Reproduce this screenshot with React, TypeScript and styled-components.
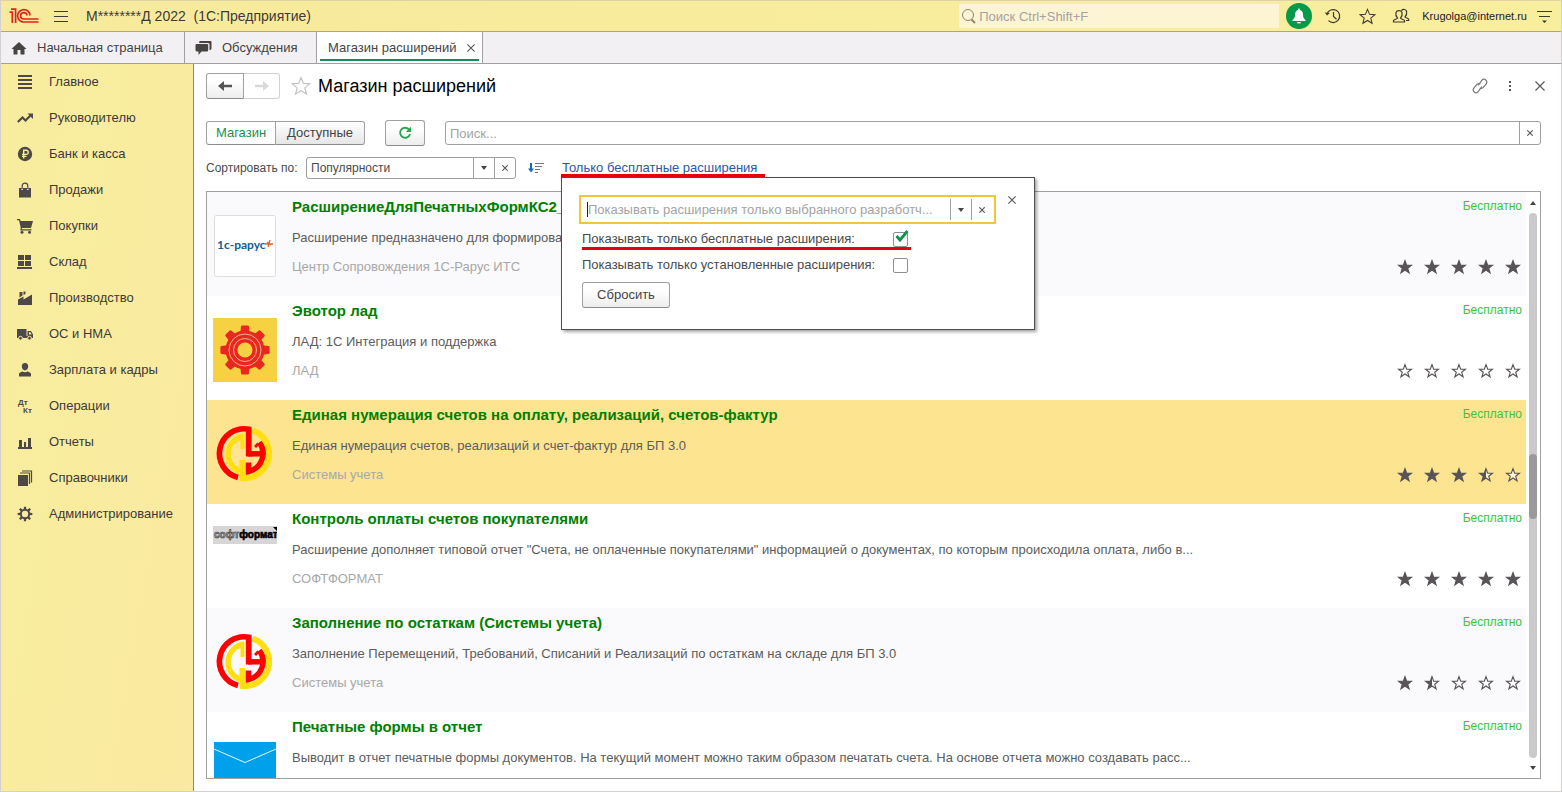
import React from "react";
import styled, { createGlobalStyle, css } from "styled-components";

const colors = {
  ink: "#3f3a36",
  text: "#4a4a4a",
  muted: "#a8a8a8",
  line: "#a0a0a0",
  green: "#008000",
  price: "#3cc43c",
  alert: "#e3000f",
  icon: "#4e4848",
};

const GlobalStyle = createGlobalStyle`
  *, *::before, *::after { box-sizing: border-box; }
  body {
    margin: 0;
    font-family: "Liberation Sans", Arial, sans-serif;
    font-size: 13px;
    line-height: 16px;
    color: ${colors.text};
    background: #fff;
  }
  button, input, select { font: inherit; color: inherit; margin: 0; }
  button { padding: 0; border: 0; background: none; }
  svg { display: block; flex: none; }
`;

const Window = styled.div`
  display: flex;
  flex-direction: column;
  height: 100vh;
  border: 1px solid #d3d0cf;
  border-top-color: #e0d2a8;
`;

/* ---------- title bar ---------- */

const TitleBar = styled.header`
  display: flex;
  align-items: center;
  flex: none;
  height: 31px;
  padding: 0 7px 0 8px;
  background: linear-gradient(90deg, #f8ea9c, #f8eb9c 40%, #f9ed9e);
  border-bottom: 1px solid #b3a66a;
  color: ${colors.ink};
`;

const IconButton = styled.button<{ $size?: number }>`
  display: flex;
  align-items: center;
  justify-content: center;
  flex: none;
  width: ${(p) => p.$size ?? 34}px;
  height: 26px;
`;

const AppTitle = styled.div`
  flex: 1;
  margin-left: 3px;
  font-size: 14px;
  white-space: pre;
`;

const GlobalSearch = styled.label`
  display: flex;
  align-items: center;
  gap: 2px;
  width: 320px;
  height: 24px;
  padding: 0 2px;
  margin-right: 3px;
  background: #fdf4d4;
`;

const PlainInput = styled.input`
  flex: 1;
  min-width: 0;
  height: 100%;
  padding: 0;
  border: 0;
  outline: 0;
  background: none;
  &::placeholder { color: #a3a3a3; opacity: 1; }
`;

const BellBadge = styled.span`
  display: flex;
  align-items: center;
  justify-content: center;
  width: 26px;
  height: 26px;
  border-radius: 50%;
  background: #059a49;
`;

const UserName = styled.span`
  margin: 0 7px 0 4px;
  font-size: 11px;
  color: #222;
`;

/* ---------- tabs ---------- */

const TabBar = styled.nav`
  display: flex;
  flex: none;
  height: 32px;
  background: #f2f0f2;
  border-bottom: 1px solid ${colors.line};
`;

const Tab = styled.button<{ $active?: boolean; $width: number }>`
  position: relative;
  display: flex;
  align-items: center;
  gap: 10px;
  width: ${(p) => p.$width}px;
  padding: 0 0 0 10px;
  border-right: 1px solid ${colors.line};
  color: #444;
  white-space: nowrap;
  ${(p) =>
    p.$active &&
    css`
      justify-content: space-between;
      padding: 0 7px 0 11px;
      background: #fff;
      &::after {
        content: "";
        position: absolute;
        left: 3px;
        right: 3px;
        bottom: 2px;
        height: 2px;
        background: #1a8a57;
      }
    `}
`;

/* ---------- sidebar ---------- */

const Body = styled.div`
  display: flex;
  flex: 1;
  min-height: 0;
`;

const Sidebar = styled.nav`
  flex: none;
  width: 193px;
  background: linear-gradient(100deg, #f8ed9e 20%, #fae9a0);
  border-right: 1px solid #8d8878;
`;

const SideItem = styled.a`
  display: flex;
  align-items: center;
  gap: 16px;
  height: 36px;
  padding-left: 16px;
  color: ${colors.ink};
  text-decoration: none;
`;

/* ---------- main area ---------- */

const Main = styled.main`
  display: flex;
  flex-direction: column;
  flex: 1;
  min-width: 0;
  padding: 9px 6px 12px 12px;
`;

const PageHeader = styled.div`
  display: flex;
  align-items: center;
  height: 26px;
`;

const PageTitle = styled.h1`
  flex: 1;
  margin: 0;
  font-size: 18px;
  line-height: 24px;
  font-weight: 400;
  color: #000;
`;

const ButtonGroup = styled.div`
  display: flex;
  flex: none;
`;

const Button = styled.button<{ $active?: boolean; $faded?: boolean }>`
  display: flex;
  align-items: center;
  justify-content: center;
  height: 26px;
  min-width: 40px;
  padding: 0 8px;
  border: 1px solid ${(p) => (p.$faded ? "#d0d0d0" : colors.line)};
  border-bottom-color: ${(p) => (p.$faded ? "#d0d0d0" : "#8c8c8c")};
  border-radius: 3px;
  background: ${(p) => (p.$active ? "#fff" : "linear-gradient(#fff 30%, #ededed)")};
  color: ${(p) => (p.$active ? "#159250" : "#444")};
`;

const History = styled(ButtonGroup)`
  margin-right: 4px;
  ${Button} { min-width: 38px; border-radius: 3px 0 0 3px; }
  ${Button} + ${Button} { min-width: 36px; border-left: 0; border-radius: 0 3px 3px 0; background: #fff; }
`;

const Switcher = styled(ButtonGroup)`
  ${Button} { width: 70px; height: 24px; border-radius: 3px 0 0 3px; }
  ${Button} + ${Button} {
    width: 89px;
    border-left: 0;
    border-radius: 0 3px 3px 0;
    background: linear-gradient(#fff, #e6e6e6);
  }
`;

const ToolRow = styled.div`
  display: flex;
  align-items: center;
  height: 28px;
  margin: 20px 14px 0 0;
  gap: 20px;
`;

const Field = styled.div<{ $wide?: boolean }>`
  display: flex;
  align-items: stretch;
  flex: ${(p) => (p.$wide ? "1" : "none")};
  width: ${(p) => (p.$wide ? "auto" : "210px")};
  height: ${(p) => (p.$wide ? 24 : 22)}px;
  border: 1px solid ${colors.line};
  border-radius: 3px;
  background: #fff;
`;

const FieldInput = styled(PlainInput)`
  padding-left: 4px;
`;

const Select = styled.select`
  flex: 1;
  min-width: 0;
  padding: 0 4px;
  border: 0;
  outline: 0;
  appearance: none;
  background: none;
  font-size: 12px;
`;

const FieldButton = styled.button`
  display: flex;
  align-items: center;
  justify-content: center;
  flex: none;
  width: 21px;
  border-left: 1px solid ${colors.line};
`;

const SortRow = styled.div`
  display: flex;
  align-items: center;
  height: 22px;
  margin-top: 10px;
`;

const SortLabel = styled.label`
  width: 100px;
  font-size: 12px;
`;

const FilterAnchor = styled.div`
  position: relative;
  display: flex;
  align-items: center;
  height: 22px;
  margin-left: 6px;
  &::after {
    content: "";
    position: absolute;
    z-index: 3;
    left: -1px;
    right: -8px;
    bottom: 2px;
    height: 3px;
    background: ${colors.alert};
  }
`;

const FilterLink = styled.a`
  color: #2b57a5;
  text-decoration: none;
  white-space: nowrap;
`;

/* ---------- filter popup ---------- */

const Popup = styled.section`
  position: absolute;
  z-index: 2;
  top: 20px;
  left: -1px;
  width: 474px;
  height: 153px;
  padding: 17px 14px 0 17px;
  display: flex;
  align-items: flex-start;
  gap: 8px;
  background: #fff;
  border: 1px solid #4d4d4d;
  box-shadow: 2px 2px 3px rgba(0, 0, 0, 0.35);
`;

const PopupForm = styled.div`
  display: flex;
  flex-direction: column;
  width: 417px;
`;

const DeveloperField = styled.div`
  display: flex;
  align-items: center;
  height: 29px;
  margin-bottom: 2px;
  padding: 0 2px 0 6px;
  border: 2px solid #f2c63c;
  ${PlainInput} { padding-left: 0; }
  ${FieldButton} { height: 21px; }
`;

const Caret = styled.span`
  flex: none;
  width: 1px;
  height: 15px;
  background: #222;
`;

const CheckRow = styled.div<{ $marked?: boolean }>`
  position: relative;
  display: flex;
  align-items: center;
  justify-content: space-between;
  width: 329px;
  height: 26px;
  margin-left: 3px;
  padding-right: 3px;
  ${(p) =>
    p.$marked &&
    css`
      &::after {
        content: "";
        position: absolute;
        left: 0;
        right: 0;
        bottom: 2px;
        height: 3px;
        background: ${colors.alert};
      }
    `}
`;

const CheckBox = styled.span`
  position: relative;
  width: 15px;
  height: 15px;
  input {
    display: block;
    width: 15px;
    height: 15px;
    appearance: none;
    border: 1px solid #8f8f8f;
    border-radius: 2px;
    background: #fff;
  }
  svg {
    position: absolute;
    left: 1px;
    top: -2px;
    pointer-events: none;
  }
`;

const ResetButton = styled(Button)`
  width: 88px;
  margin: 4px 0 0 3px;
`;

const CloseButton = styled.button`
  display: flex;
  align-items: center;
  justify-content: center;
  width: 16px;
  height: 10px;
`;

/* ---------- list ---------- */

const ListFrame = styled.div`
  display: flex;
  flex: 1;
  min-height: 0;
  margin: 12px 14px 0 0;
  border: 1px solid ${colors.line};
`;

const List = styled.ul`
  flex: 1;
  min-width: 0;
  margin: 0;
  padding: 0;
  list-style: none;
  overflow: hidden;
`;

const Item = styled.li<{ $selected: boolean }>`
  display: flex;
  gap: 15px;
  height: 104px;
  padding: 6px 4px 0 6px;
  background: #fff;
  &:nth-child(4n + 1) { background: #faf9fb; }
  ${(p) => p.$selected && css`&& { background: #fde491; }`}
`;

const Thumb = styled.div`
  flex: none;
  width: 64px;
  padding-top: 16px;
`;

const ItemText = styled.div`
  flex: 1;
  min-width: 0;
`;

const ItemTitle = styled.h2`
  margin: 0 0 14px;
  font-size: 15px;
  line-height: 18px;
  font-weight: 700;
  color: ${colors.green};
`;

const ItemLine = styled.p<{ $muted?: boolean }>`
  margin: 0 0 13px;
  white-space: nowrap;
  color: ${(p) => (p.$muted ? colors.muted : "#5c5c5c")};
`;

const ItemSide = styled.div`
  display: flex;
  flex-direction: column;
  align-items: flex-end;
  gap: 44px;
`;

const Price = styled.span`
  font-size: 12px;
  color: ${colors.price};
`;

const Stars = styled.div`
  display: flex;
  gap: 9px;
`;

const ScrollBar = styled.div`
  display: flex;
  flex-direction: column;
  align-items: center;
  justify-content: space-between;
  flex: none;
  width: 14px;
  padding: 9px 0 8px;
`;

const Track = styled.div`
  flex: 1;
  width: 8px;
  margin: 8px 0;
  padding-top: 241px;
  border-radius: 4px;
  background: #cbc9cb;
`;

const Handle = styled.div`
  height: 65px;
  border-radius: 4px;
  background: #9b999b;
`;

/* ---------- drawings ---------- */

const Cross = ({ size = 6 }: { size?: number }) => (
  <svg width={size} height={size} viewBox="0 0 10 10">
    <path d="M0.5 0.5 9.5 9.5M9.5 0.5 0.5 9.5" stroke="#555" strokeWidth={11 / size} />
  </svg>
);

const Triangle = ({ up }: { up?: boolean }) => (
  <svg width="6" height="4" viewBox="0 0 6 4">
    <path d={up ? "M0 4 3 0 6 4z" : "M0 0H6L3 4z"} fill="#444" />
  </svg>
);

const STAR = "M9 2.6 10.700 7.300H15.400L11.700 10.200 13.100 14.800 9 12 4.900 14.800 6.300 10.200 2.600 7.300H7.300z";

const Star = ({ fill }: { fill: number }) => (
  <svg width="18" height="18" viewBox="0 0 18 18">
    <path
      d={STAR}
      fill={fill === 1 ? "#575357" : "#fff"}
      fillOpacity={fill === 1 ? 1 : 0.6}
      stroke="#575357"
      strokeWidth="1.100"
    />
    {fill === 0.5 && <path d="M9 2.6V12L4.900 14.800 6.300 10.200 2.600 7.300H7.300z" fill="#575357" />}
  </svg>
);

const OneCLogo = () => (
  <svg width="30" height="18" viewBox="0 0 30 18" fill="none" stroke="#d8261c" strokeWidth="1.700">
    <path d="M.5 5.200H3.300V16M2 2.200H6.600V16" />
    <path d="M21 8.500A6.200 6.200 0 1 0 15 15H29.500" />
    <path d="M18 8.500A3.200 3.200 0 1 0 15 12H29.500" />
  </svg>
);

const MenuIcon = () => (
  <svg width="14" height="13" viewBox="0 0 14 13">
    <path d="M0 1.500H14M0 6.500H14M0 11.500H14" stroke="#3d3b2d" />
  </svg>
);

const SearchIcon = () => (
  <svg width="16" height="18" viewBox="0 0 16 18" fill="none" stroke="#8c8868">
    <circle cx="7" cy="8" r="5.500" />
    <path d="M10.500 12.500 14 16" strokeWidth="2" />
  </svg>
);

const BellIcon = () => (
  <svg width="14" height="16" viewBox="0 0 14 16" fill="#fff">
    <path d="M7 .5C7.800 .5 8 1.200 8 2c2 .6 3 2.400 3 4.500 0 3 .8 4 2.500 5.500V13H.5V12C2.200 10.500 3 9.500 3 6.500 3 4.400 4 2.600 6 2c0-.8.200-1.500 1-1.500zM5 14H9a2 1.600 0 0 1-4 0z" />
  </svg>
);

const HistoryIcon = () => (
  <svg width="18" height="16" viewBox="0 0 18 16" fill="none" stroke="#3d3b2d" strokeWidth="1.200">
    <path d="M3 6A6.500 6.500 0 1 1 4.500 12.600" />
    <path d="M9.500 4V8.500L12.500 11.200" />
    <path d="M.8 4.500 3 7.500 5.800 5z" fill="#3d3b2d" stroke="none" />
  </svg>
);

const FavoriteIcon = ({ size = 17, stroke = "#3d3b2d" }: { size?: number; stroke?: string }) => (
  <svg width={size} height={size} viewBox="0 0 18 18" fill="none" stroke={stroke} strokeWidth="1.100">
    <path d="M9 1.500 11.200 6.700 16.800 7.100 12.500 10.700 13.900 16.200 9 13.200 4.100 16.200 5.500 10.700 1.200 7.100 6.800 6.700z" />
  </svg>
);

const UsersIcon = () => (
  <svg width="18" height="16" viewBox="0 0 18 16" fill="none" stroke="#3d3b2d" strokeWidth="1.200">
    <path d="M1.500 14V12.500C2 11.500 5 11 5.500 10.200 4 8.500 3.500 6.500 4 4.500 4.800 2 9.200 2 10 4.500c.5 2 0 4-1.500 5.700C9 11 12 11.500 12.500 12.500V14z" />
    <path d="M9.500 2.500C11 .8 14 1.200 14.600 3.500 15 5.500 14.500 7.200 13 9c.5.800 3.300 1.200 3.700 2.200V12.500H14" />
  </svg>
);

const SettingsIcon = () => (
  <svg width="15" height="15" viewBox="0 0 15 15">
    <path d="M0 2.500H15M2 7.500H13" stroke="#3d3b2d" />
    <path d="M5 11.500H10L7.500 14z" fill="#3d3b2d" />
  </svg>
);

const HomeIcon = () => (
  <svg width="16" height="14" viewBox="0 0 16 14" fill="#484444">
    <path d="M8 1 15.500 8H13.500V13.500H9.500V9H6.500V13.500H2.500V8H.5z" />
  </svg>
);

const ChatIcon = () => (
  <svg width="17" height="16" viewBox="0 0 17 16" fill="#484444">
    <path d="M5 1H15.500Q16.500 1 16.500 2V8.500Q16.500 10 14.500 10V4.500Q14.500 3 13 3H4Q4 1 5 1z" />
    <path d="M1.500 4H12Q13.200 4 13.200 5.200V10Q13.200 11.500 12 11.500H6.500L3.500 15V11.500H2Q.5 11.500 .5 10V5Q.5 4 1.500 4z" />
  </svg>
);

const Arrow = ({ right }: { right?: boolean }) => (
  <svg width="14" height="12" viewBox="0 0 14 12">
    <path
      d={right ? "M0 4.800H8V1L14 6 8 11V7.200H0z" : "M14 4.800H6V1L0 6 6 11V7.200H14z"}
      fill={right ? "#d8d8d8" : "#555"}
    />
  </svg>
);

const LinkIcon = () => (
  <svg width="16" height="16" viewBox="0 0 16 16" fill="none" stroke="#777" strokeWidth="1.200">
    <path d="M6 7.500 10 2.200C12.300-.4 16.200 3 14.200 5.800L11 9.600C10 10.600 8.600 10.600 7.700 10" />
    <path d="M10 8.500 6 13.800C3.700 16.400-.2 13 1.800 10.200L5 6.400C6 5.400 7.400 5.400 8.300 6" />
  </svg>
);

const DotsIcon = () => (
  <svg width="4" height="12" viewBox="0 0 4 12" fill="#555">
    <path d="M1 1H3V3H1zM1 5H3V7H1zM1 9H3V11H1z" />
  </svg>
);

const RefreshIcon = () => (
  <svg width="14" height="14" viewBox="0 0 14 14">
    <path d="M11.300 4A5 5 0 1 0 12 8" fill="none" stroke="#2da44e" strokeWidth="1.900" />
    <path d="M13 .8V6H7.800z" fill="#2da44e" />
  </svg>
);

const SortIcon = () => (
  <svg width="16" height="12" viewBox="0 0 16 12">
    <path d="M3 1V8" stroke="#1b6cb0" strokeWidth="2" />
    <path d="M0 6.500H6L3 10.500z" fill="#1b6cb0" />
    <path d="M7 1.500H16M7 4.500H14M7 7.500H12M7 10.500H10" stroke="#777" />
  </svg>
);

const Tick = () => (
  <svg width="15" height="14" viewBox="0 0 15 14">
    <path d="M2.500 6 6 10 13.500 1" fill="none" stroke="#0f9150" strokeWidth="2.800" />
  </svg>
);

const gearPath = (teeth: number, rOut: number, rIn: number, c: number, top = 0.36, base = 0.62) => {
  const pts: string[] = [];
  for (let i = 0; i < teeth; i++) {
    const a = (i * 2 * Math.PI) / teeth - Math.PI / 2;
    const w = Math.PI / teeth;
    [[-base, rIn], [-top, rOut], [top, rOut], [base, rIn]].forEach(([k, r]) => {
      pts.push(`${(c + r * Math.cos(a + k * w)).toFixed(2)} ${(c + r * Math.sin(a + k * w)).toFixed(2)}`);
    });
  }
  return `M${pts.join("L")}Z`;
};

const sideIcons: Record<string, React.ReactNode> = {
  main: <path d="M1 2H15M1 6H15M1 10H15M1 14H15" stroke={colors.icon} strokeWidth="2" />,
  trend: (
    <>
      <path d="M.8 12 5.500 7.500 8.500 10.500 13.500 5.500" fill="none" stroke={colors.icon} strokeWidth="2.200" />
      <path d="M10.500 3.500H16V9z" />
    </>
  ),
  bank: (
    <>
      <circle cx="8" cy="8" r="7.200" />
      <path d="M6.700 12.500V4.200H9.200Q11.200 4.200 11.200 6.300T9.200 8.400H5M5 10.400H9.500" fill="none" stroke="#f8ec9e" strokeWidth="1.400" />
    </>
  ),
  bag: (
    <>
      <path d="M2 6H4.500V8H6V6H10V8H11.500V6H14V15.500H2z" />
      <path d="M5.200 7V4Q5.200 1.200 8 1.200T10.800 4V7" fill="none" stroke={colors.icon} strokeWidth="1.200" />
    </>
  ),
  cart: (
    <>
      <path d="M0 1H3L3.600 3H16L14 10H5L4.800 11.200H14.500V12.500H3.200L3.800 10 2 2.300H0z" />
      <circle cx="5" cy="14.200" r="1.500" />
      <circle cx="12.500" cy="14.200" r="1.500" />
    </>
  ),
  stock: <path d="M1 1H7V6H1zM8 1H14V6H8zM1 7H7V12H1zM8 7H14V12H8zM0 13H15V15H0z" />,
  factory: <path d="M1 15V9.500L6.500 6.500V9.500L15 4.500V15zM2.500 7.500V2H5.500V5.500zM6.500 5V1.500H8.500V4z" />,
  truck: (
    <>
      <path d="M0 3H9.500V12H0zM10.500 5H14L16 8.500V12H10.500zM9 10H11V12H9z" />
      <path d="M12 6.300H13.500L14.600 8.500H12z" fill="#f8ec9e" />
      <circle cx="3.500" cy="12.200" r="1.900" stroke="#f8ec9e" />
      <circle cx="12.500" cy="12.200" r="1.900" stroke="#f8ec9e" />
    </>
  ),
  person: <path d="M8 1C10.300 1 11.200 2.800 11.200 4.500S9.800 8.500 8 8.500 4.800 6.200 4.800 4.500 5.700 1 8 1zM2 14.500V12Q2 10.500 5.500 9.500 8 11 10.500 9.500 14 10.500 14 12V14.500z" />,
  debit: (
    <>
      <text x="1" y="7" fontSize="8" fontWeight="700">Дт</text>
      <text x="6" y="15" fontSize="8" fontWeight="700">Кт</text>
    </>
  ),
  chart: <path d="M1 13H15V15H1zM2 6H5V14H2zM7 8H9V14H7zM11 4H14V14H11z" />,
  books: (
    <>
      <path d="M1 5H11V16H1z" />
      <path d="M3 3H12.500V14M5 1H14.500V12.500" fill="none" stroke={colors.icon} strokeWidth="1.200" />
    </>
  ),
  gear: (
    <>
      <path d={gearPath(8, 7.4, 5.2, 8)} />
      <circle cx="8" cy="8" r="3.200" fill="#f9ea9f" />
    </>
  ),
};

const SideIcon = ({ name }: { name: string }) => (
  <svg width="16" height="16" viewBox="0 0 16 16" fill={colors.icon}>
    {sideIcons[name]}
  </svg>
);

const RarusLogo = () => (
  <svg width="64" height="64" viewBox="0 0 64 64">
    <rect x="1.500" y="1.500" width="61" height="61" rx="2" fill="#fff" stroke="#dedede" />
    <text x="4" y="35" fontFamily="Lato, sans-serif" fontSize="12" fontWeight="700" fill="#12608f">
      1с-рарус
    </text>
    <path d="M52 30H60M57 26 55 33M54 28 58 31" stroke="#e0662c" strokeWidth="1.300" />
  </svg>
);

const GearLogo = () => (
  <svg width="64" height="64" viewBox="0 0 64 64">
    <rect width="64" height="64" fill="#f6d243" />
    <circle cx="32" cy="32" r="19.500" fill="#e8281f" />
    <path
      d={gearPath(8, 23.5, 17.5, 32, 0.3, 0.5)}
      fill="#e8281f"
      stroke="#e8281f"
      strokeWidth="2.500"
      strokeLinejoin="round"
    />
    <circle cx="32" cy="32" r="16" fill="none" stroke="#f7b08a" />
    <circle cx="32" cy="32" r="11.500" fill="none" stroke="#f7b08a" />
    <circle cx="32" cy="32" r="7.500" fill="#f6d243" />
  </svg>
);

const SystemsLogo = () => (
  <svg width="64" height="64" viewBox="0 0 64 64" fill="none" strokeWidth="6">
    <path d="M39.500 8.500A24.500 24.500 0 0 1 29.500 56.100V38" stroke="#ffdf12" />
    <path d="M31 14A18.300 18.300 0 0 0 27 49.300" stroke="#ffdf12" strokeWidth="5.500" />
    <path d="M29.500 12V27" stroke="#ffdf12" strokeWidth="4" />
    <path d="M25 55.400A24.700 24.700 0 0 1 35.700 7.200V34.500" stroke="#f00" strokeWidth="5.700" />
    <path d="M35 31.800H50" stroke="#f00" strokeWidth="5.500" />
    <path d="M46.300 20.300A18.500 18.500 0 0 1 35.500 49.500V40.500" stroke="#f00" strokeWidth="5.500" />
    <path d="M42 25 45.500 21.500" stroke="#f00" strokeWidth="3" />
  </svg>
);

const SoftLogo = () => (
  <svg width="64" height="18" viewBox="0 0 64 18">
    <rect width="64" height="18" fill="#d6d6d6" />
    <text x="1" y="12" fontSize="10" fontWeight="700" strokeWidth=".6">
      <tspan fill="#bbb" stroke="#333">софт</tspan>
      <tspan fill="#000" stroke="#000">формат</tspan>
    </text>
    <path d="M60 1H64V5z" />
  </svg>
);

const MailLogo = () => (
  <svg width="64" height="64" viewBox="0 0 64 64">
    <path d="M1 8H63V56H1z" fill="#00a1ea" />
    <path d="M1 15 32 28.500 63 15" fill="none" stroke="#e8f7ff" />
  </svg>
);

/* ---------- data ---------- */

const sections = [
  ["main", "Главное"],
  ["trend", "Руководителю"],
  ["bank", "Банк и касса"],
  ["bag", "Продажи"],
  ["cart", "Покупки"],
  ["stock", "Склад"],
  ["factory", "Производство"],
  ["truck", "ОС и НМА"],
  ["person", "Зарплата и кадры"],
  ["debit", "Операции"],
  ["chart", "Отчеты"],
  ["books", "Справочники"],
  ["gear", "Администрирование"],
];

const extensions = [
  {
    logo: <RarusLogo />,
    title: "РасширениеДляПечатныхФормКС2_КС3",
    text: "Расширение предназначено для формирования",
    vendor: "Центр Сопровождения 1С-Рарус ИТС",
    rating: 5,
  },
  { logo: <GearLogo />, title: "Эвотор лад", text: "ЛАД: 1С Интеграция и поддержка", vendor: "ЛАД", rating: 0 },
  {
    logo: <SystemsLogo />,
    title: "Единая нумерация счетов на оплату, реализаций, счетов-фактур",
    text: "Единая нумерация счетов, реализаций и счет-фактур для БП 3.0",
    vendor: "Системы учета",
    rating: 3.5,
    selected: true,
  },
  {
    logo: <SoftLogo />,
    title: "Контроль оплаты счетов покупателями",
    text: 'Расширение дополняет типовой отчет "Счета, не оплаченные покупателями" информацией о документах, по которым происходила оплата, либо в...',
    vendor: "СОФТФОРМАТ",
    rating: 5,
  },
  {
    logo: <SystemsLogo />,
    title: "Заполнение по остаткам (Системы учета)",
    text: "Заполнение Перемещений, Требований, Списаний и Реализаций по остаткам на складе для БП 3.0",
    vendor: "Системы учета",
    rating: 1.5,
  },
  {
    logo: <MailLogo />,
    title: "Печатные формы в отчет",
    text: "Выводит в отчет печатные формы документов. На текущий момент можно таким образом печатать счета. На основе отчета можно создавать расс...",
    vendor: "",
    rating: 0,
  },
];

const starFill = (rating: number, i: number) => (rating >= i + 1 ? 1 : rating > i ? 0.5 : 0);

export default function App() {
  return (
    <Window>
      <GlobalStyle />
      <TitleBar>
        <OneCLogo />
        <IconButton $size={44} aria-label="Меню">
          <MenuIcon />
        </IconButton>
        <AppTitle>{"М********Д 2022  (1С:Предприятие)"}</AppTitle>
        <GlobalSearch>
          <SearchIcon />
          <PlainInput placeholder="Поиск Ctrl+Shift+F" aria-label="Поиск" />
        </GlobalSearch>
        <IconButton aria-label="Уведомления">
          <BellBadge>
            <BellIcon />
          </BellBadge>
        </IconButton>
        <IconButton aria-label="История">
          <HistoryIcon />
        </IconButton>
        <IconButton aria-label="Избранное">
          <FavoriteIcon />
        </IconButton>
        <IconButton aria-label="Пользователи">
          <UsersIcon />
        </IconButton>
        <UserName>Krugolga@internet.ru</UserName>
        <IconButton $size={20} aria-label="Настройки">
          <SettingsIcon />
        </IconButton>
      </TitleBar>

      <TabBar>
        <Tab $width={184}>
          <HomeIcon />
          Начальная страница
        </Tab>
        <Tab $width={132}>
          <ChatIcon />
          Обсуждения
        </Tab>
        <Tab $active $width={166}>
          Магазин расширений
          <Cross size={8} />
        </Tab>
      </TabBar>

      <Body>
        <Sidebar>
          {sections.map(([icon, label]) => (
            <SideItem key={icon} href="#">
              <SideIcon name={icon} />
              {label}
            </SideItem>
          ))}
        </Sidebar>

        <Main>
          <PageHeader>
            <History>
              <Button aria-label="Назад">
                <Arrow />
              </Button>
              <Button $faded aria-label="Вперед">
                <Arrow right />
              </Button>
            </History>
            <IconButton aria-label="В избранное">
              <FavoriteIcon size={20} stroke="#c4c4c4" />
            </IconButton>
            <PageTitle>Магазин расширений</PageTitle>
            <IconButton $size={30} aria-label="Ссылка">
              <LinkIcon />
            </IconButton>
            <IconButton $size={30} aria-label="Еще">
              <DotsIcon />
            </IconButton>
            <IconButton $size={30} aria-label="Закрыть">
              <Cross size={10} />
            </IconButton>
          </PageHeader>

          <ToolRow>
            <Switcher>
              <Button $active>Магазин</Button>
              <Button>Доступные</Button>
            </Switcher>
            <Button aria-label="Обновить">
              <RefreshIcon />
            </Button>
            <Field $wide>
              <FieldInput placeholder="Поиск..." aria-label="Поиск расширений" />
              <FieldButton aria-label="Очистить">
                <Cross />
              </FieldButton>
            </Field>
          </ToolRow>

          <SortRow>
            <SortLabel htmlFor="sort">Сортировать по:</SortLabel>
            <Field>
              <Select id="sort">
                <option>Популярности</option>
              </Select>
              <FieldButton aria-label="Выбрать">
                <Triangle />
              </FieldButton>
              <FieldButton aria-label="Очистить сортировку">
                <Cross />
              </FieldButton>
            </Field>
            <IconButton $size={40} aria-label="Порядок">
              <SortIcon />
            </IconButton>
            <FilterAnchor>
              <FilterLink href="#">Только бесплатные расширения</FilterLink>
              <Popup>
                <PopupForm>
                  <DeveloperField>
                    <Caret />
                    <PlainInput
                      placeholder="Показывать расширения только выбранного разработч..."
                      aria-label="Разработчик"
                    />
                    <FieldButton aria-label="Выбрать разработчика">
                      <Triangle />
                    </FieldButton>
                    <FieldButton aria-label="Очистить разработчика">
                      <Cross />
                    </FieldButton>
                  </DeveloperField>
                  <CheckRow $marked>
                    <label htmlFor="free">Показывать только бесплатные расширения:</label>
                    <CheckBox>
                      <input id="free" type="checkbox" defaultChecked />
                      <Tick />
                    </CheckBox>
                  </CheckRow>
                  <CheckRow>
                    <label htmlFor="installed">Показывать только установленные расширения:</label>
                    <CheckBox>
                      <input id="installed" type="checkbox" />
                    </CheckBox>
                  </CheckRow>
                  <ResetButton>Сбросить</ResetButton>
                </PopupForm>
                <CloseButton aria-label="Закрыть фильтр">
                  <Cross size={8} />
                </CloseButton>
              </Popup>
            </FilterAnchor>
          </SortRow>

          <ListFrame>
            <List>
              {extensions.map((e) => (
                <Item key={e.title} $selected={!!e.selected}>
                  <Thumb>{e.logo}</Thumb>
                  <ItemText>
                    <ItemTitle>{e.title}</ItemTitle>
                    <ItemLine>{e.text}</ItemLine>
                    <ItemLine $muted>{e.vendor}</ItemLine>
                  </ItemText>
                  <ItemSide>
                    <Price>Бесплатно</Price>
                    <Stars>
                      {[0, 1, 2, 3, 4].map((i) => (
                        <Star key={i} fill={starFill(e.rating, i)} />
                      ))}
                    </Stars>
                  </ItemSide>
                </Item>
              ))}
            </List>
            <ScrollBar>
              <Triangle up />
              <Track>
                <Handle />
              </Track>
              <Triangle />
            </ScrollBar>
          </ListFrame>
        </Main>
      </Body>
    </Window>
  );
}
